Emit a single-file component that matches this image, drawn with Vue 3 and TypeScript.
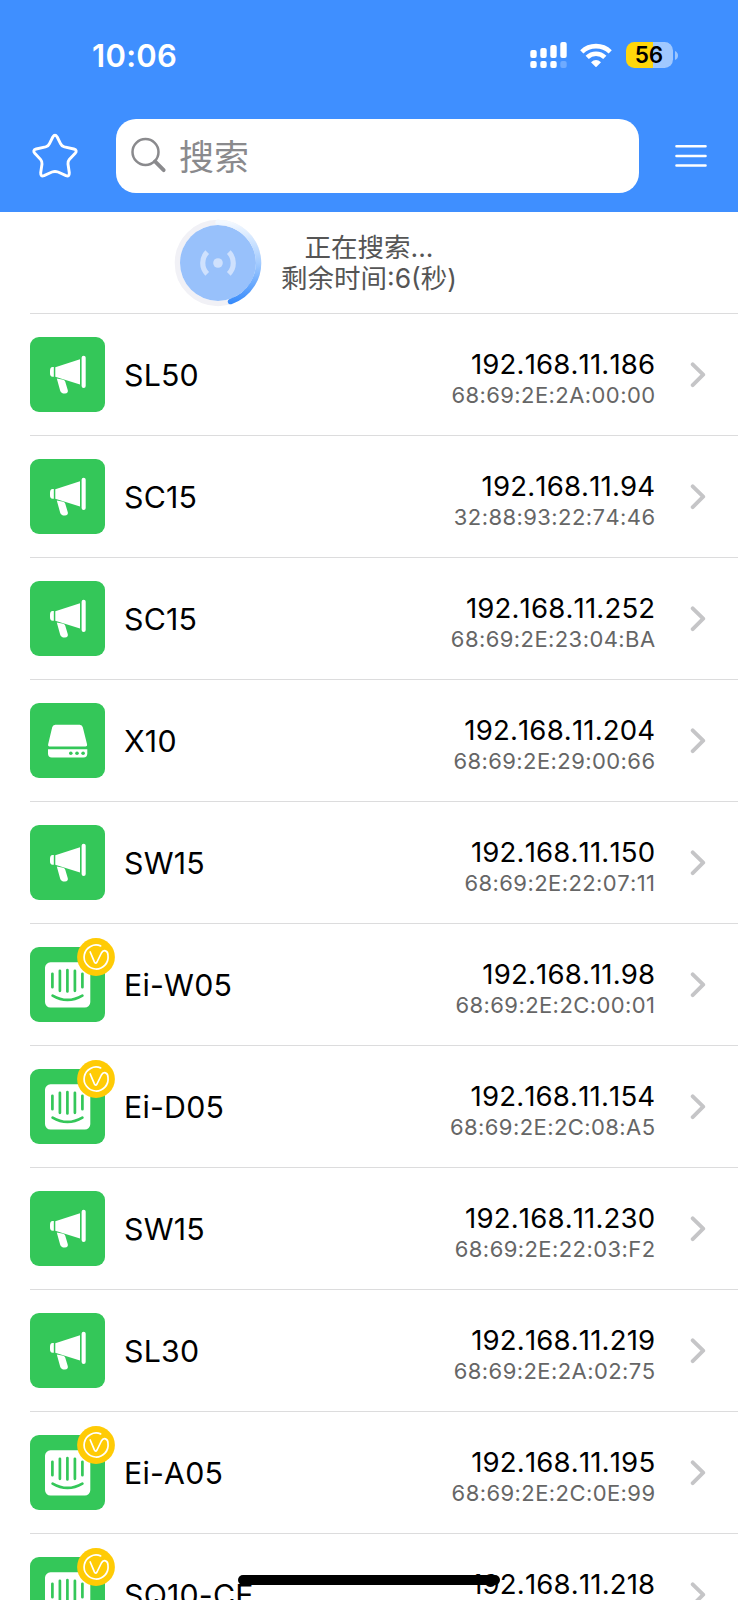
<script setup lang="ts">
type Kind = 'horn' | 'drive' | 'intercom'

interface Device {
  name: string
  ip: string
  mac: string
  kind: Kind
}

const devices: Device[] = [
  { name: 'SL50', ip: '192.168.11.186', mac: '68:69:2E:2A:00:00', kind: 'horn' },
  { name: 'SC15', ip: '192.168.11.94', mac: '32:88:93:22:74:46', kind: 'horn' },
  { name: 'SC15', ip: '192.168.11.252', mac: '68:69:2E:23:04:BA', kind: 'horn' },
  { name: 'X10', ip: '192.168.11.204', mac: '68:69:2E:29:00:66', kind: 'drive' },
  { name: 'SW15', ip: '192.168.11.150', mac: '68:69:2E:22:07:11', kind: 'horn' },
  { name: 'Ei-W05', ip: '192.168.11.98', mac: '68:69:2E:2C:00:01', kind: 'intercom' },
  { name: 'Ei-D05', ip: '192.168.11.154', mac: '68:69:2E:2C:08:A5', kind: 'intercom' },
  { name: 'SW15', ip: '192.168.11.230', mac: '68:69:2E:22:03:F2', kind: 'horn' },
  { name: 'SL30', ip: '192.168.11.219', mac: '68:69:2E:2A:02:75', kind: 'horn' },
  { name: 'Ei-A05', ip: '192.168.11.195', mac: '68:69:2E:2C:0E:99', kind: 'intercom' },
  { name: 'SQ10-CE', ip: '192.168.11.218', mac: '', kind: 'intercom' },
]
</script>

<template>
  <div class="screen">
    <header class="header">
      <div class="status">
        <span class="time">10:06</span>
        <div class="indicators">
          <svg class="signal" width="37" height="27" viewBox="0 0 37 27" fill="#fff">
            <rect x="0.3" y="8" width="6.4" height="8" rx="2" />
            <rect x="10.3" y="6" width="6.4" height="10" rx="2" />
            <rect x="20.3" y="3" width="6.4" height="13" rx="2" />
            <rect x="30.3" y="0" width="6.4" height="16" rx="2" />
            <rect x="0.3" y="19" width="6.4" height="7" rx="2" />
            <rect x="10.3" y="19" width="6.4" height="7" rx="2" />
            <rect x="20.3" y="19" width="6.4" height="7" rx="2" />
            <rect x="30.3" y="19" width="6.4" height="7" rx="2" opacity="0.25" />
          </svg>
          <svg class="wifi" width="32" height="25" viewBox="0 0 32 25" fill="none" stroke="#fff" stroke-width="4.6">
            <path d="M1.8 8.8A20.5 20.5 0 0 1 30.2 8.8" />
            <path d="M7.2 14.4A12.6 12.6 0 0 1 24.8 14.4" />
            <path d="M11 19.2Q16 14.7 21 19.2L16.5 23.7Q16 24.2 15.5 23.7Z" fill="#fff" stroke="none" />
          </svg>
          <div class="battery"><span>56</span></div>
          <svg class="nub" width="3" height="9" viewBox="0 0 3 9"><path d="M0 0Q3 1.5 3 4.5T0 9Z" fill="#9cc6ff" /></svg>
        </div>
      </div>
      <div class="toolbar">
        <svg class="star" width="50" height="50" viewBox="30 130 50 50" fill="none" stroke="#fff" stroke-width="2.9" stroke-linejoin="round">
          <path d="M52.8 137Q55 133.6 57.2 137L60.5 143.6Q61.6 146.2 64.4 146.9L73.8 149Q77.8 150.2 75.2 153.2L69.3 159.6Q67.8 161.3 68 164L69.3 172.8Q69.5 177 66 175.6L58 172Q55 170.9 52 172L44 175.6Q40.5 177 40.7 172.8L42 164Q42.2 161.3 40.7 159.6L34.8 153.2Q32.2 150.2 36.2 149L45.6 146.9Q48.4 146.2 49.5 143.6Z" />
        </svg>
        <div class="search">
          <svg width="38" height="38" viewBox="0 0 38 38" fill="none" stroke="#8a8a8d" stroke-linecap="round">
            <circle cx="15.5" cy="15" r="13" stroke-width="2.5" />
            <path d="M25 24.4L33.7 33.2" stroke-width="3.8" />
          </svg>
          <span>搜索</span>
        </div>
        <svg class="menu" width="32" height="24" viewBox="0 0 32 24" stroke="#fff" stroke-width="2.6" stroke-linecap="round">
          <path d="M1.5 2.3H30.5M1.5 12H30.5M1.5 21.5H30.5" />
        </svg>
      </div>
    </header>

    <section class="scan">
      <svg class="radar" width="88" height="88" viewBox="-44 -44 88 88" fill="none">
        <defs>
          <linearGradient id="sweep" x1="0" y1="-41" x2="0" y2="41" gradientUnits="userSpaceOnUse">
            <stop offset="0" stop-color="#f4f9ff" />
            <stop offset="0.5" stop-color="#a4ccff" />
            <stop offset="1" stop-color="#3489fb" />
          </linearGradient>
        </defs>
        <circle r="40.6" stroke="#f1f1f6" stroke-width="5.4" />
        <circle r="38" fill="#98c1fb" />
        <path d="M0 -40.6A40.6 40.6 0 0 1 12.5 38.6" stroke="url(#sweep)" stroke-width="5.4" stroke-linecap="round" />
        <circle r="4.8" fill="#cfe1fd" />
        <path d="M-10.8 -10.8A15.3 15.3 0 0 0 -10.8 10.8M10.8 -10.8A15.3 15.3 0 0 1 10.8 10.8" stroke="#cfe1fd" stroke-width="5.2" />
      </svg>
      <div class="scan-text">
        <div>正在搜索...</div>
        <div>剩余时间:6(秒)</div>
      </div>
    </section>

    <main class="list">
      <div v-for="(d, i) in devices" :key="i" class="row">
        <div class="icon">
          <svg v-if="d.kind === 'horn'" width="75" height="75" viewBox="0 0 75 75" fill="#fff">
            <path d="M23.8 30V39.8H22.5Q20 39.8 20 36V33.8Q20 30 22.5 30Z" />
            <path d="M25.3 30.3L50 22.2V47.5L25.3 39.7Z" />
            <rect x="51.6" y="18.7" width="4.1" height="32.2" rx="2" />
            <path d="M26.8 41.6L33.3 42.8Q34.8 43.2 35.2 44.6L37.8 53.2Q38.4 56.3 35 56.5Q31.2 56.7 30.2 53.7Z" />
          </svg>
          <svg v-else-if="d.kind === 'drive'" width="75" height="75" viewBox="0 0 75 75" fill="#fff">
            <path d="M25.3 21.7H49.7Q52.2 21.7 52.8 24.2L57.1 41.5Q57.4 43.4 55.5 43.4H19.5Q17.7 43.4 18.1 41.5L22.2 24.2Q22.8 21.7 25.3 21.7Z" />
            <path d="M18 46.2H57.3V50.4Q57.3 54.5 53.5 54.5H21.8Q18 54.5 18 50.4Z" />
            <g fill="#34c759"><circle cx="40.8" cy="50.2" r="1.8" /><circle cx="47" cy="50.2" r="1.8" /><circle cx="53.1" cy="50.2" r="1.8" /></g>
          </svg>
          <svg v-else width="75" height="75" viewBox="0 0 75 75">
            <rect x="15" y="15.3" width="45.3" height="45.3" rx="5.5" fill="#fff" />
            <path d="M22.4 26.8V40.2M29.9 23.8V43.8M37.4 23V44.5M44.9 23.8V43.8M52.4 26.8V40.2M22.6 48.6Q37.4 57.3 52.4 48.6" fill="none" stroke="#34c759" stroke-width="2.7" stroke-linecap="round" />
          </svg>
          <svg v-if="d.kind === 'intercom'" class="badge" width="38" height="38" viewBox="-19 -19 38 38" fill="none">
            <circle r="18.9" fill="#ffcb05" />
            <path d="M4.6 -11.1A12 12 0 1 0 12 -1.5C12 -6.7 7.5 -7.8 5.4 -4L1 5Q-0.4 7.3 -1.6 4.8L-5.8 -5" stroke="#fff" stroke-width="1.7" stroke-linecap="round" stroke-linejoin="round" />
          </svg>
        </div>
        <span class="name">{{ d.name }}</span>
        <div class="addr">
          <span class="ip">{{ d.ip }}</span>
          <span class="mac">{{ d.mac }}</span>
        </div>
        <svg class="chevron" width="16" height="28" viewBox="0 0 16 28" fill="none" stroke="#c5c5c7" stroke-width="3.9" stroke-linecap="round" stroke-linejoin="round">
          <path d="M2.7 3.3L13.2 13.7L2.7 24.1" />
        </svg>
      </div>
    </main>
    <div class="home-bar"></div>
  </div>
</template>

<style>
body {
  margin: 0;
}
</style>

<style scoped>
.screen {
  position: relative;
  width: 738px;
  height: 1600px;
  overflow: hidden;
  background: #fff;
  color: #000;
  font-family: Inter, 'Noto Sans CJK SC', sans-serif;
}
.screen svg {
  display: block;
  flex: none;
}
.header {
  height: 212.3px;
  background: #3f8fff;
}
.status {
  display: flex;
  justify-content: space-between;
  align-items: center;
  height: 110px;
  padding: 0 60.5px 0 92px;
}
.time {
  padding-top: 1px;
  color: #fff;
  font-size: 31px;
  font-weight: 600;
  line-height: 36px;
  letter-spacing: 0.3px;
}
.indicators {
  display: flex;
  align-items: center;
}
.wifi {
  margin-left: 13px;
}
.battery {
  width: 47px;
  height: 26px;
  margin-left: 14px;
  border-radius: 8.5px;
  background: linear-gradient(90deg, #ffd60a 27px, #a0c8ff 27px);
  font-size: 22.5px;
  font-weight: 600;
  line-height: 26px;
  text-align: center;
}
.nub {
  margin-left: 2px;
}
.toolbar {
  display: flex;
  align-items: center;
  padding: 9.3px 31px 0 30px;
}
.star {
  margin-top: -2px;
}
.search {
  display: flex;
  align-items: center;
  box-sizing: border-box;
  width: 522.5px;
  height: 74px;
  margin-left: 36px;
  padding-left: 13.5px;
  border-radius: 20px;
  background: #fff;
  color: #8a8a8d;
  font-size: 35px;
}
.search span {
  margin-left: 11.5px;
  padding-bottom: 4px;
}
.menu {
  margin-top: -1px;
  margin-left: 36.5px;
}
.scan {
  display: flex;
  align-items: center;
  box-sizing: border-box;
  height: 102px;
  margin-left: 30px;
  padding-left: 144px;
  border-bottom: 1px solid #dcdcdd;
}
.scan-text {
  width: 180px;
  margin-left: 17px;
  color: #555;
  font-size: 26.5px;
  line-height: 31px;
  text-align: center;
  white-space: nowrap;
}
.list {
  padding-left: 30px;
}
.row {
  display: flex;
  align-items: center;
  box-sizing: border-box;
  height: 122.03px;
  padding-right: 32px;
  border-bottom: 1px solid #dcdcdd;
  font-kerning: none;
}
.icon {
  position: relative;
  width: 75px;
  height: 75px;
  border-radius: 9px;
  background: #34c759;
}
.badge {
  position: absolute;
  left: 47px;
  top: -9px;
}
.name {
  margin-left: 19px;
  font-size: 30.3px;
  letter-spacing: 0.2px;
}
.addr {
  display: flex;
  flex-direction: column;
  align-items: flex-end;
  margin-left: auto;
  padding-top: 10px;
}
.ip {
  margin-right: 0.2px;
  font-size: 27.6px;
  line-height: 31px;
  letter-spacing: 0.15px;
}
.mac {
  height: 30px;
  color: #666;
  font-size: 22px;
  line-height: 30px;
  letter-spacing: 0.42px;
}
.chevron {
  margin-left: 34.5px;
}
.home-bar {
  position: absolute;
  left: 238px;
  top: 1575px;
  width: 262px;
  height: 10px;
  border-radius: 5px;
  background: #000;
}
</style>
